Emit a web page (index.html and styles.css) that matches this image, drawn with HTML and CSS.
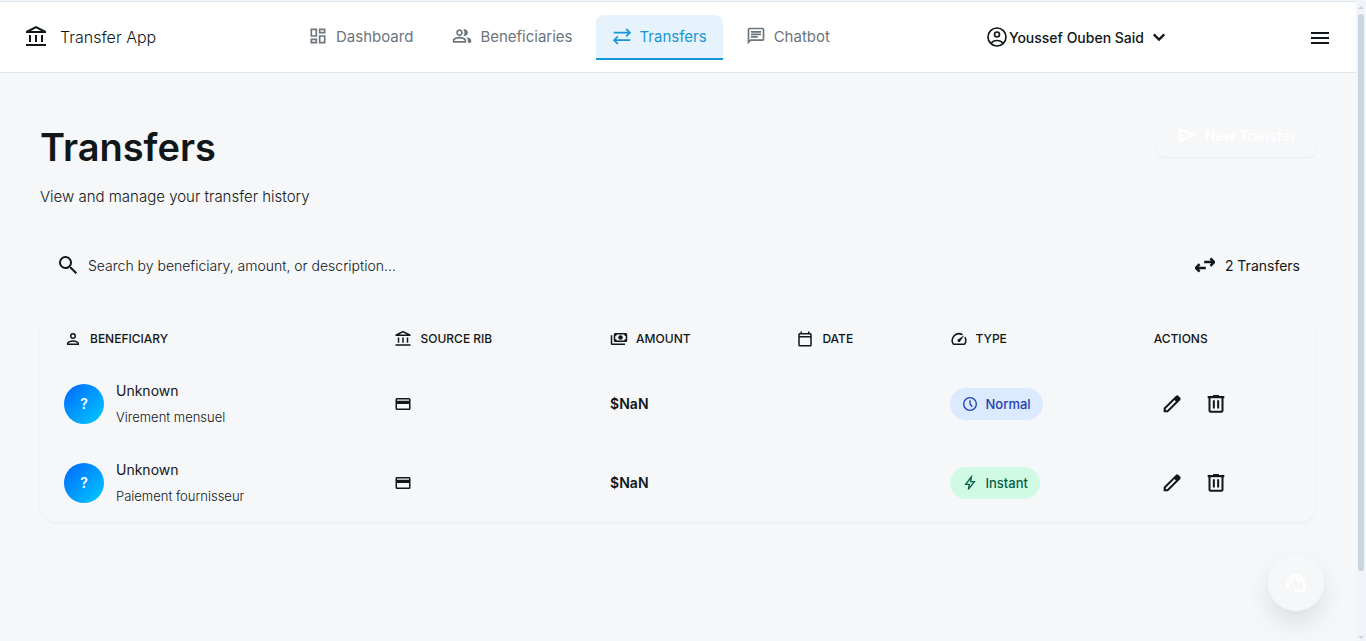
FILE: index.html
```html
<!DOCTYPE html>
<html lang="en">
<head>
<meta charset="utf-8">
<meta name="viewport" content="width=device-width, initial-scale=1">
<title>Transfers - Transfer App</title>
<link rel="stylesheet" href="styles.css">
</head>
<body>
<svg class="sprite" aria-hidden="true">
  <symbol id="bank" viewBox="0 0 24 24"><path d="M7 10H5v7h2zM13 10h-2v7h2zM22 19H2v2h20zM19 10h-2v7h2zM12 3.26 17.2 6H6.8L12 3.26M12 1 2 6v2h20V6z"/></symbol>
  <symbol id="dashboard" viewBox="0 0 24 24"><path d="M19 5v2h-4V5h4M9 5v6H5V5h4m10 8v6h-4v-6h4M9 17v2H5v-2h4M21 3h-8v6h8V3zM11 3H3v10h8V3zm10 8h-8v10h8V11zm-10 4H3v6h8v-6z"/></symbol>
  <symbol id="people" viewBox="0 0 24 24"><path d="M16.67 13.13C18.04 14.06 19 15.32 19 17v3h4v-3c0-2.18-3.57-3.47-6.33-3.87zM15 12c2.21 0 4-1.79 4-4s-1.79-4-4-4c-.47 0-.91.1-1.33.24C14.5 5.27 15 6.58 15 8s-.5 2.73-1.33 3.76c.42.14.86.24 1.33.24zM9 12c2.21 0 4-1.79 4-4s-1.79-4-4-4-4 1.79-4 4 1.79 4 4 4zm0-6c1.1 0 2 .9 2 2s-.9 2-2 2-2-.9-2-2 .9-2 2-2zM9 13c-2.67 0-8 1.34-8 4v3h16v-3c0-2.66-5.33-4-8-4zm6 5H3v-.99C3.2 16.29 6.3 15 9 15s5.8 1.29 6 2v1z"/></symbol>
  <symbol id="sync" viewBox="0 0 24 24"><path class="line" d="M2 8H21M17 3.500l4.500 4.500-4.500 4.500M22 17H3M7 12.500 2.500 17 7 21.500"/></symbol>
  <symbol id="chat" viewBox="0 0 24 24"><path d="M4 4h16v12H5.170L4 17.170V4m0-2c-1.100 0-2 .9-2 2v18l4-4h14c1.100 0 2-.9 2-2V4c0-1.100-.9-2-2-2H4zm2 10h8v2H6v-2zm0-3h12v2H6V9zm0-3h12v2H6V6z"/></symbol>
  <symbol id="account" viewBox="0 0 24 24"><g class="line"><circle cx="12" cy="12" r="10.800"/><circle cx="12" cy="9" r="3"/><path d="M5 19.500c1.500-2.300 4-3.300 7-3.300s5.500 1 7 3.300"/></g></symbol>
  <symbol id="chevron" viewBox="0 0 24 24"><path class="line bold" d="m5 8.500 7 7 7-7"/></symbol>
  <symbol id="menu" viewBox="0 0 24 24"><path d="M3 7h18v2H3zM3 12h18v2H3zM3 17h18v2H3z"/></symbol>
  <symbol id="send" viewBox="0 0 24 24"><path d="M2 21V3l21 9zm2.500-4 12-5-12-5v3.500l6.500 1.500-6.500 1.500z"/></symbol>
  <symbol id="search" viewBox="0 0 24 24"><path d="M15.500 14h-.79l-.28-.27A6.470 6.470 0 0 0 16 9.500 6.500 6.500 0 1 0 9.500 16c1.610 0 3.090-.59 4.230-1.570l.27.28v.79l5.600 5.600 1.490-1.490zm-6 0a4.500 4.500 0 1 1 0-9 4.500 4.500 0 0 1 0 9z"/></symbol>
  <symbol id="swap" viewBox="0 0 24 24"><path class="line bold" d="M11 8.500h12M18.500 4l4.500 4.500-4.500 4.500M13 15.500H1M5.500 11 1 15.500 5.500 20"/></symbol>
  <symbol id="person" viewBox="0 0 24 24"><path d="M12 12a4 4 0 1 0 0-8 4 4 0 0 0 0 8m0-6a2 2 0 1 1 0 4 2 2 0 0 1 0-4m0 7.500c-2.700 0-8 1.200-8 4V20h16v-2.500c0-2.800-5.300-4-8-4M6 18v-.5c.4-.8 3.200-2 6-2s5.600 1.200 6 2v.5z"/></symbol>
  <symbol id="payments" viewBox="0 0 24 24"><path fill-rule="evenodd" d="M7 4h14a2 2 0 0 1 2 2v8a2 2 0 0 1-2 2H7a2 2 0 0 1-2-2V6a2 2 0 0 1 2-2m2 2a2 2 0 0 1-2 2v4a2 2 0 0 1 2 2h10a2 2 0 0 1 2-2V8a2 2 0 0 1-2-2zM1 7h2v11h17v2H3a2 2 0 0 1-2-2z"/><circle cx="14" cy="10" r="3"/></symbol>
  <symbol id="calendar" viewBox="0 0 24 24"><path fill-rule="evenodd" d="M5 22a2 2 0 0 1-2-2V6c0-1.100.9-2 2-2h1V2h2v2h8V2h2v2h1a2 2 0 0 1 2 2v14a2 2 0 0 1-2 2zm0-2h14V10H5zM5 8h14V6H5z"/></symbol>
  <symbol id="speed" viewBox="0 0 24 24"><path d="m20.380 8.570-1.230 1.850a8 8 0 0 1-.22 7.580H5.070A8 8 0 0 1 15.580 6.850l1.850-1.230A10 10 0 0 0 3.350 19a2 2 0 0 0 1.720 1h13.850a2 2 0 0 0 1.740-1 10 10 0 0 0-.27-10.440zM10.590 15.410a2 2 0 0 0 2.830 0l5.660-8.490-8.490 5.660a2 2 0 0 0 0 2.830z"/></symbol>
  <symbol id="card" viewBox="0 0 24 24"><path fill-rule="evenodd" d="M4 4h16a2 2 0 0 1 2 2v12a2 2 0 0 1-2 2H4a2 2 0 0 1-2-2V6c0-1.100.9-2 2-2m0 3.500h16V6H4zm0 4.500v6h16v-6z"/></symbol>
  <symbol id="clock" viewBox="0 0 24 24"><g class="line"><circle cx="12" cy="12" r="9.500"/><path d="M12 6.500V12l3.500 4.200"/></g></symbol>
  <symbol id="bolt" viewBox="0 0 24 24"><path class="line" d="M14 3 5.500 14H11l-1.500 7.500L18.500 10H13z"/></symbol>
  <symbol id="edit" viewBox="0 0 24 24"><path fill-rule="evenodd" d="M2 22v-5.200L16.600 2.300a2.200 2.200 0 0 1 3.100 0l2 2a2.200 2.200 0 0 1 0 3.100L7.200 22zm2.500-2.500h1.700L16.700 9 15 7.300 4.500 17.800z"/></symbol>
  <symbol id="trash" viewBox="0 0 24 24"><path fill-rule="evenodd" d="M2 2.500h6.500V1.200h7v1.300H22V5h-1v15a2.500 2.500 0 0 1-2.500 2.500h-13A2.500 2.500 0 0 1 3 20V5H2zM5.400 5v15h13.200V5zm2.800 2.500h2.400v10H8.200zm5.200 0h2.400v10h-2.400z"/></symbol>
  <symbol id="agent" viewBox="0 0 24 24"><path d="M21 12.220C21 6.730 16.740 3 12 3c-4.690 0-9 3.650-9 9.280-.6.340-1 .98-1 1.720v2c0 1.100.9 2 2 2h1v-6.100a7 7 0 0 1 14 0V19h-8v2h8a2 2 0 0 0 2-2v-1.220c.59-.31 1-.92 1-1.640v-2.300c0-.7-.41-1.310-1-1.620z"/><circle cx="9" cy="13" r="1"/><circle cx="15" cy="13" r="1"/><path d="M18 11.030A6.040 6.040 0 0 0 12.050 6c-3.030 0-6.290 2.510-6.030 6.450a8.070 8.070 0 0 0 4.860-5.890c1.310 2.630 4 4.440 7.120 4.470z"/></symbol>
</svg>
<div class="frame">
  <div class="page">
    <header class="topbar">
      <a class="brand" href="#"><svg class="icon icon-lg"><use href="#bank"/></svg>Transfer App</a>
      <nav class="nav" aria-label="Main">
        <a class="nav-link" href="#"><svg class="icon"><use href="#dashboard"/></svg>Dashboard</a>
        <a class="nav-link" href="#"><svg class="icon"><use href="#people"/></svg>Beneficiaries</a>
        <a class="nav-link active" href="#" aria-current="page"><svg class="icon"><use href="#sync"/></svg>Transfers</a>
        <a class="nav-link" href="#"><svg class="icon"><use href="#chat"/></svg>Chatbot</a>
      </nav>
      <button class="user" type="button"><svg class="icon"><use href="#account"/></svg><span>Youssef Ouben Said</span><svg class="icon icon-sm chevron"><use href="#chevron"/></svg></button>
      <button class="menu" type="button" aria-label="Menu"><svg class="icon icon-lg"><use href="#menu"/></svg></button>
    </header>
    <main class="content">
      <div class="page-head">
        <div>
          <h1>Transfers</h1>
          <p class="subtitle">View and manage your transfer history</p>
        </div>
        <button class="new-transfer" type="button"><svg class="icon"><use href="#send"/></svg>New Transfer</button>
      </div>
      <div class="toolbar">
        <label class="search"><svg class="icon icon-lg"><use href="#search"/></svg><input type="text" aria-label="Search transfers" placeholder="Search by beneficiary, amount, or description..."></label>
        <div class="count"><svg class="icon"><use href="#swap"/></svg>2 Transfers</div>
      </div>
      <table class="transfers">
        <thead>
          <tr>
            <th class="col-name"><span class="head"><svg class="icon icon-sm"><use href="#person"/></svg>BENEFICIARY</span></th>
            <th class="col-rib"><span class="head"><svg class="icon icon-sm"><use href="#bank"/></svg>SOURCE RIB</span></th>
            <th class="col-amount"><span class="head"><svg class="icon icon-sm"><use href="#payments"/></svg>AMOUNT</span></th>
            <th class="col-date"><span class="head"><svg class="icon icon-sm"><use href="#calendar"/></svg>DATE</span></th>
            <th class="col-type"><span class="head"><svg class="icon icon-sm"><use href="#speed"/></svg>TYPE</span></th>
            <th><span class="head">ACTIONS</span></th>
          </tr>
        </thead>
        <tbody>
          <tr>
            <td><div class="person"><span class="avatar">?</span><div><div class="name">Unknown</div><div class="note">Virement mensuel</div></div></div></td>
            <td><svg class="icon icon-sm"><use href="#card"/></svg></td>
            <td class="amount">$NaN</td>
            <td></td>
            <td><span class="badge normal"><svg class="icon icon-xs"><use href="#clock"/></svg>Normal</span></td>
            <td><div class="actions"><button type="button" aria-label="Edit"><svg class="icon"><use href="#edit"/></svg></button><button type="button" aria-label="Delete"><svg class="icon"><use href="#trash"/></svg></button></div></td>
          </tr>
          <tr>
            <td><div class="person"><span class="avatar">?</span><div><div class="name">Unknown</div><div class="note">Paiement fournisseur</div></div></div></td>
            <td><svg class="icon icon-sm"><use href="#card"/></svg></td>
            <td class="amount">$NaN</td>
            <td></td>
            <td><span class="badge instant"><svg class="icon icon-xs"><use href="#bolt"/></svg>Instant</span></td>
            <td><div class="actions"><button type="button" aria-label="Edit"><svg class="icon"><use href="#edit"/></svg></button><button type="button" aria-label="Delete"><svg class="icon"><use href="#trash"/></svg></button></div></td>
          </tr>
        </tbody>
      </table>
    </main>
  </div>
  <div class="scrollbar" aria-hidden="true"><span class="arrow up"></span><span class="thumb"></span><span class="arrow down"></span></div>
</div>
<button class="support" type="button" aria-label="Support"><svg class="icon icon-lg"><use href="#agent"/></svg></button>
</body>
</html>
```
FILE: styles.css
```css
* { box-sizing: border-box; }
body {
  margin: 0;
  background: #f6f7f9;
  color: #111618;
  font-family: Inter, "Liberation Sans", sans-serif;
  font-size: 14px;
}
button, input { font: inherit; color: inherit; background: none; border: 0; padding: 0; }
button { cursor: pointer; }
a { color: inherit; text-decoration: none; }

.sprite { display: none; }
.icon { width: 20px; height: 20px; flex: none; display: block; fill: currentColor; }
.icon-lg { width: 24px; height: 24px; }
.icon-sm { width: 18px; height: 18px; }
.icon-xs { width: 16px; height: 16px; }
.line { fill: none; stroke: currentColor; stroke-width: 2; }
.bold { stroke-width: 3; }

.frame { display: flex; min-height: 100vh; border-top: 1px solid #f1f5f9; }
.page { flex: 1; border-top: 1px solid #dbe5ea; }

.topbar {
  display: grid;
  grid-template-columns: 284px 1fr auto 122px;
  align-items: center;
  height: 71px;
  padding: 0 24px;
  background: #fff;
  border-bottom: 1px solid #e2e5ea;
}
.brand { display: flex; align-items: center; gap: 12px; font-size: 16px; font-weight: 300; }
.nav { display: flex; gap: 7px; margin-left: -16px; }
.nav-link {
  display: flex;
  align-items: center;
  gap: 8px;
  height: 45px;
  padding: 0 16px;
  font-size: 15px;
  color: #6b757e;
  border-bottom: 2px solid transparent;
  border-radius: 8px 8px 0 0;
}
.nav-link.active { color: #1596d8; background: #e7f3fc; border-bottom-color: #1596d8; }
.user { display: flex; align-items: center; gap: 2px; margin-right: 42px; font-weight: 500; }
.chevron { margin-left: 4px; }
.menu { justify-self: end; }

.content { padding: 40px; }
.page-head { display: flex; justify-content: space-between; align-items: flex-start; }
h1 { margin: 0; padding-top: 8px; font-size: 38px; line-height: 52px; font-weight: 600; }
.subtitle { margin: 12px 0 0; font-size: 15px; line-height: 24px; font-weight: 300; }
.new-transfer {
  display: flex;
  align-items: center;
  gap: 8px;
  height: 44px;
  padding: 0 20px;
  border-radius: 8px;
  color: #fff;
  font-weight: 600;
  box-shadow: 0 1px 2px rgba(0, 0, 0, 0.06);
}
.toolbar { display: flex; justify-content: space-between; align-items: center; height: 64px; margin-top: 24px; padding: 0 16px; }
.search { display: flex; flex: 1; align-items: center; gap: 8px; max-width: 400px; }
.search input { flex: 1; min-width: 0; outline: 0; font-weight: 300; }
.search input::placeholder { color: #111618; opacity: 1; }
.count { display: flex; align-items: center; gap: 10px; }

.transfers {
  width: 100%;
  margin-top: 16px;
  table-layout: fixed;
  border-collapse: separate;
  border-spacing: 0;
  border-radius: 16px;
  box-shadow: 0 1px 3px rgba(0, 0, 0, 0.05);
}
.transfers th { height: 51px; padding: 0 24px; font-size: 12px; font-weight: 500; text-align: left; }
.transfers td { height: 79px; padding: 0 24px; }
.col-name { width: 25.9%; }
.col-rib { width: 16.9%; }
.col-amount { width: 14.6%; }
.col-date { width: 12%; }
.col-type { width: 16%; }
.head { display: flex; align-items: center; gap: 8px; }
.person { display: flex; align-items: center; gap: 12px; }
.avatar {
  display: grid;
  place-items: center;
  width: 40px;
  height: 40px;
  border-radius: 50%;
  color: #fff;
  font-weight: 600;
  background: linear-gradient(135deg, #0066ff, #00ccff);
}
.name { line-height: 26px; }
.note { font-size: 13px; line-height: 26px; font-weight: 300; }
.transfers .amount { font-weight: 600; }
.badge { display: inline-flex; align-items: center; gap: 8px; height: 32px; padding: 0 12px; border-radius: 16px; font-size: 13px; font-weight: 500; }
.normal { color: #1e40af; background: #dbeafe; }
.instant { color: #065f46; background: #d1fae5; }
.actions { display: flex; gap: 8px; }
.actions button { display: grid; place-items: center; width: 36px; height: 36px; }

.scrollbar { display: flex; flex-direction: column; align-items: center; width: 10px; padding: 5px 0 2px; background: #f1f5f9; }
.thumb { width: 6px; height: 88%; margin-top: 5px; border-radius: 3px; background: #cbd5e1; }
.arrow { border: 3px solid transparent; }
.up { border-top: 0; border-bottom-color: #cbd5e1; }
.down { margin-top: auto; border-bottom: 0; border-top-color: #cbd5e1; }

.support {
  position: fixed;
  right: 42px;
  bottom: 30px;
  display: grid;
  place-items: center;
  width: 56px;
  height: 56px;
  border-radius: 50%;
  color: #fff;
  background: #f6f7f9;
  box-shadow: 0 12px 24px rgba(0, 0, 0, 0.1);
}
```
